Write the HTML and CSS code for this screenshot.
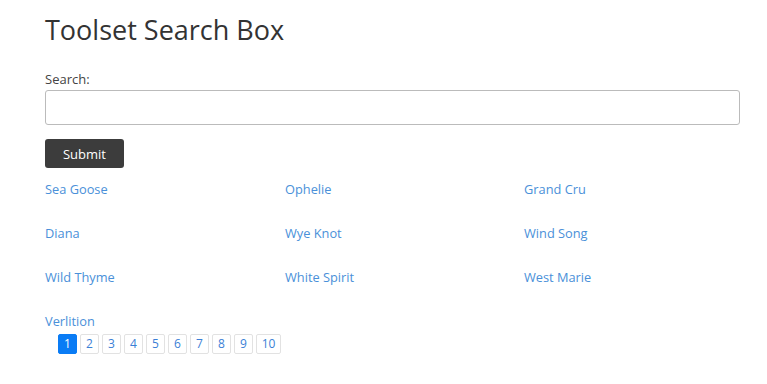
FILE: index.html
```html
<!DOCTYPE html>
<html lang="en">
  <head>
    <meta charset="UTF-8" />
    <title>Toolset Search Box</title>
    <link rel="stylesheet" href="styles.css">
  </head>
  <body>
    <div class="container">
      <h1>Toolset Search Box</h1>
      <form class="search-form">
        <label for="search">Search:</label>
        <input type="text" id="search" />
        <button type="submit">Submit</button>
      </form>
      <div class="results">
        <a href="#">Sea Goose</a>
        <a href="#">Ophelie</a>
        <a href="#">Grand Cru</a>
        <a href="#">Diana</a>
        <a href="#">Wye Knot</a>
        <a href="#">Wind Song</a>
        <a href="#">Wild Thyme</a>
        <a href="#">White Spirit</a>
        <a href="#">West Marie</a>
        <a href="#">Verlition</a>
      </div>
      <ul class="pagination">
        <li class="active"><a href="#">1</a></li>
        <li><a href="#">2</a></li>
        <li><a href="#">3</a></li>
        <li><a href="#">4</a></li>
        <li><a href="#">5</a></li>
        <li><a href="#">6</a></li>
        <li><a href="#">7</a></li>
        <li><a href="#">8</a></li>
        <li><a href="#">9</a></li>
        <li><a href="#">10</a></li>
      </ul>
    </div>
  </body>
</html>
```

FILE: styles.css
```css
body {
  margin: 0;
  padding: 0;
  font-family: "Open Sans", "Noto Sans", sans-serif;
  background: #ffffff;
  color: #333333;
}
.container {
  width: 695px;
  margin-left: 45px;
  padding-top: 12px;
}
h1 {
  margin: 0;
  font-size: 27px;
  font-weight: 400;
  line-height: 36px;
  color: #333333;
}
.search-form {
  margin-top: 22px;
}
label {
  display: block;
  font-size: 13px;
  line-height: 18px;
  color: #444444;
}
input {
  display: block;
  box-sizing: border-box;
  width: 100%;
  height: 35px;
  margin-top: 2px;
  border: 1px solid #bbbbbb;
  border-radius: 3px;
}
button {
  margin-top: 14px;
  width: 79px;
  height: 29px;
  border: none;
  border-radius: 3px;
  background-color: #3c3c3c;
  color: #ffffff;
  font-family: inherit;
  font-size: 13px;
}
.results {
  display: grid;
  grid-template-columns: 240px 239px 216px;
  row-gap: 26px;
  margin-top: 12px;
}
.results a {
  font-size: 12.8px;
  line-height: 18px;
  color: #4a90d9;
  text-decoration: none;
}
.pagination {
  display: flex;
  gap: 3px;
  list-style: none;
  margin: 4px 0 0 13px;
  padding: 0;
}
.pagination a {
  display: block;
  min-width: 15px;
  height: 18px;
  padding: 0 1px;
  border: 1px solid #e2e2e2;
  border-radius: 2px;
  font-size: 12px;
  line-height: 18px;
  text-align: center;
  color: #3b7fd6;
  text-decoration: none;
}
.pagination li:last-child a {
  padding: 0 4px;
}
.pagination .active a {
  background-color: #0a7cf5;
  border-color: #0a7cf5;
  color: #ffffff;
}
```
